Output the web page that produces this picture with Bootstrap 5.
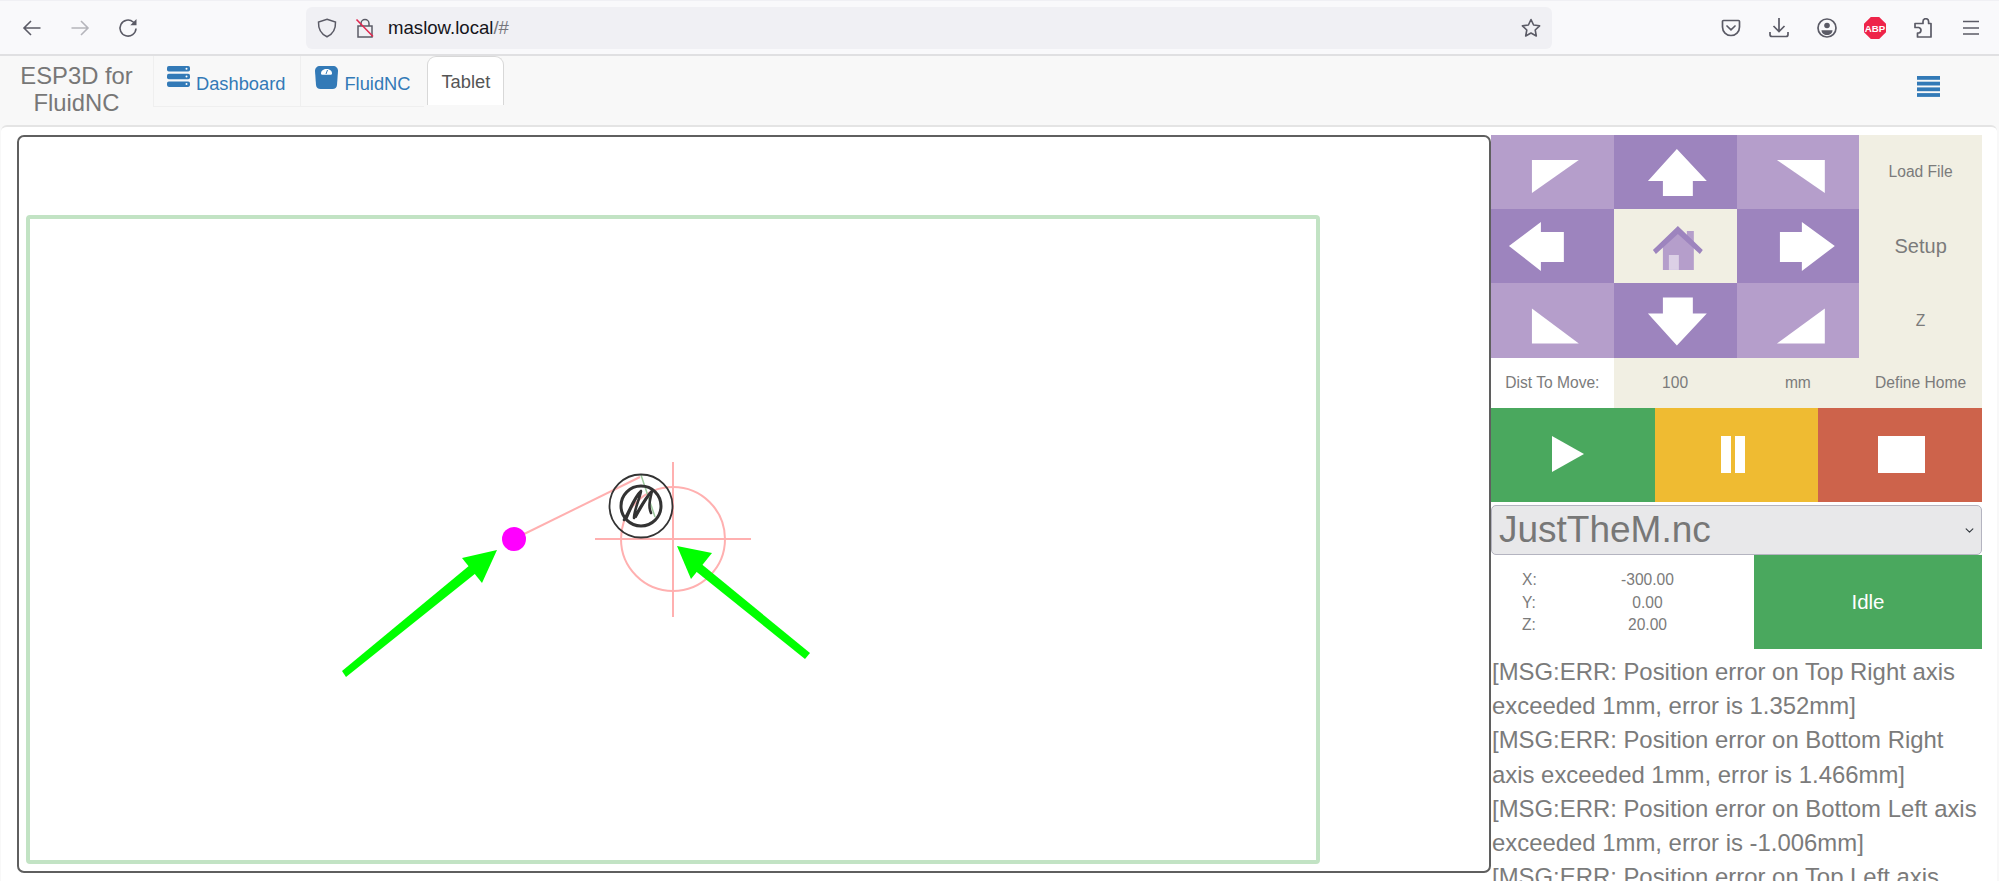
<!DOCTYPE html>
<html lang="en">
<head>
    <meta charset="UTF-8">
    <meta name="viewport" content="width=device-width, initial-scale=1.0">
    <title>ESP3D for FluidNC</title>
    <link href="https://cdn.jsdelivr.net/npm/bootstrap@5.3.0/dist/css/bootstrap.min.css" rel="stylesheet">
    <style>
        html, body {
            height: 100%;
        }
        body {
            font-family: "Liberation Sans", Arial, sans-serif;
            background-color: #f8f8f8;
            color: #7b7b7b;
            overflow: hidden;
        }
        /* browser toolbar */
        .browser-bar {
            height: 56px;
            background-color: #f9f9fb;
            border-top: 1px solid #f0f0f4;
            border-bottom: 2px solid #e0e0e2;
            padding-left: 22px;
            gap: 28px;
        }
        .browser-bar svg {
            width: 20px;
            height: 20px;
            flex: none;
        }
        .browser-bar svg.abp-icon {
            width: 22px;
            height: 22px;
            margin: 0 -1px;
        }
        .url-bar {
            width: 1246px;
            height: 42px;
            margin-left: 140px;
            margin-right: 141px;
            background-color: #f0f0f4;
            border-radius: 6px;
            padding: 0 11px;
            gap: 18px;
            font-size: 18.6px;
            color: #15141a;
        }
        .url-text {
            margin-left: -5px;
        }
        .url-dim {
            color: #77767c;
        }
        /* app navbar */
        .app-nav {
            height: 69px;
            padding: 0;
            background-color: #f8f8f8;
            align-items: flex-start;
            flex-wrap: nowrap;
            justify-content: flex-start;
        }
        .app-brand {
            width: 153px;
            margin: 6px 0 0;
            padding: 0;
            font-size: 23.8px;
            line-height: 27px;
            color: #777;
            text-align: center;
            white-space: normal;
        }
        .app-brand:hover {
            color: #777;
        }
        .app-tabs {
            border: 0;
            flex-wrap: nowrap;
        }
        .app-tabs .nav-link {
            height: 51px;
            padding: 10px 14px 0;
            margin: 0;
            gap: 6px;
            font-size: 18.3px;
            line-height: 25px;
            color: #337ab7;
            border: 0;
            border-left: 1px solid #efefef;
            border-bottom: 1px solid #efefef;
            border-radius: 0;
            background: transparent;
        }
        .app-tabs .nav-link.tab-first {
            padding-left: 13px;
            padding-right: 15px;
        }
        .app-tabs .nav-link span {
            padding-top: 5px;
        }
        .app-tabs .nav-link.active {
            height: 49px;
            margin-left: 3px;
            padding: 12px 13px 0;
            color: #555;
            background-color: #fff;
            border: 1px solid #d8d8d8;
            border-bottom: 0;
            border-radius: 9px 9px 0 0;
        }
        .app-tabs .nav-link.active span {
            padding-top: 0;
        }
        .nav-burger {
            margin: 20px 59px 0 auto;
            padding: 0;
            border: 0;
            background: transparent;
            line-height: 0;
        }
        /* tablet page */
        .tablet-frame {
            height: 756px;
            margin: 0 2px 0 1px;
            padding: 8px 15px 0 16px;
            background-color: #fff;
            border-top: 2px solid #e4e4e4;
            border-radius: 6px 6px 0 0;
            overflow: hidden;
        }
        .canvas-box {
            width: 1474px;
            height: 738px;
            flex: none;
            border: 2px solid #5f5f5f;
            border-radius: 7px;
            background-color: #fff;
        }
        .canvas-box svg {
            display: block;
            width: 100%;
            height: 100%;
        }
        .side-panel {
            width: 491px;
            flex: none;
        }
        .jog-grid {
            display: grid;
            grid-template-columns: repeat(4, 1fr);
            grid-template-rows: 74px 74px 75px 50px;
            font-size: 15.6px;
        }
        .jog-grid > div {
            min-width: 0;
        }
        .jog-grid svg {
            display: block;
            width: 100%;
            height: 100%;
        }
        .jog-light {
            background-color: #b59ecb;
        }
        .jog-dark {
            background-color: #9d84be;
        }
        .jog-beige {
            background-color: #f1efe3;
        }
        .jog-big {
            font-size: 20px;
        }
        .run-row {
            height: 94px;
        }
        .run-row > div {
            flex: 1 1 0;
        }
        .run-go {
            background-color: #4aa85e;
        }
        .run-hold {
            background-color: #efbb32;
        }
        .run-stop {
            background-color: #cd634b;
        }
        .run-row svg {
            margin-bottom: 2px;
        }
        .play-icon {
            margin-right: 10px;
        }
        .pause-icon {
            margin-right: 7px;
        }
        .stop-icon {
            margin-left: 3px;
        }
        .file-select {
            height: 50px;
            margin: 3px 0 0;
            padding: 0 30px 0 7px;
            font-size: 37px;
            line-height: 44px;
            color: #777;
            background-color: #e8e8ea;
            background-size: 11px 9px;
            background-position: right 6px center;
            border: 1px solid #b4b4c0;
            border-radius: 5px;
        }
        .status-row {
            height: 94px;
            font-size: 15.6px;
        }
        .coords {
            width: 263px;
            padding-top: 2px;
            display: grid;
            grid-template-columns: 78px 157px;
            grid-auto-rows: 22.7px;
            align-content: center;
            line-height: 22.7px;
        }
        .coords > div:nth-child(odd) {
            padding-left: 31px;
        }
        .coords > div:nth-child(even) {
            text-align: center;
        }
        .idle-box {
            width: 228px;
            font-size: 20.5px;
            color: #fff;
        }
        .log-text {
            margin-top: 6px;
            padding-left: 1px;
            font-size: 23.9px;
            line-height: 34.2px;
        }
    </style>
</head>
<body>

<!-- browser toolbar -->
<div class="browser-bar d-flex align-items-center">
    <svg viewBox="0 0 20 20" fill="none" stroke="#5b5b66" stroke-width="1.6"><path d="M18.5 10H2M9 3l-7 7 7 7"/></svg>
    <svg viewBox="0 0 20 20" fill="none" stroke="#b5b5bb" stroke-width="1.6"><path d="M1.5 10H18M11 3l7 7-7 7"/></svg>
    <svg viewBox="0 0 20 20" fill="none" stroke="#5b5b66" stroke-width="1.6"><path d="M18 10.5A8 8 0 1 1 15.2 4L17.500 6"/><path d="M18.500 1v6.200h-6.200" fill="#5b5b66" stroke="none"/></svg>
    <div class="url-bar d-flex align-items-center">
        <svg viewBox="0 0 20 20" fill="none" stroke="#5b5b66" stroke-width="1.5"><path d="M10 1.2 18.5 4c.3 7-1.8 11.700-8.500 14.800C3.300 15.700 1.200 11 1.500 4z"/></svg>
        <svg viewBox="0 0 20 20" fill="none" stroke="#5b5b66" stroke-width="1.5"><path d="M6 8V5.500a4 4 0 0 1 8 0V8M3 8h14v11H3z"/><path d="M1.500 1.500 18 18.500" stroke="#e22850" stroke-width="1.600"/></svg>
        <div class="url-text flex-grow-1"><span>maslow.local</span><span class="url-dim">/#</span></div>
        <svg viewBox="0 0 20 20" fill="none" stroke="#5b5b66" stroke-width="1.6" stroke-linejoin="round"><path d="m10 1.500 2.600 5.500 6 .8-4.400 4.200 1.100 6L10 15l-5.300 3 1.100-6L1.400 7.800l6-.8z"/></svg>
    </div>
    <svg viewBox="0 0 20 20" fill="none" stroke="#5b5b66" stroke-width="1.700"><path d="M2.500 2.500h15c.6 0 1 .4 1 1V9c0 4.800-3.800 8.500-8.500 8.500S1.500 13.800 1.500 9V3.500c0-.6.400-1 1-1z"/><path d="m6 8 4 3.800L14 8" stroke-linecap="round"/></svg>
    <svg viewBox="0 0 20 20" fill="none" stroke="#5b5b66" stroke-width="1.700"><path d="M10 0v13M4.500 8l5.500 5.500L15.500 8M1 14v2.500c0 1.100.900 2 2 2h14c1.100 0 2-.9 2-2V14"/></svg>
    <svg viewBox="0 0 20 20" fill="none" stroke="#5b5b66" stroke-width="1.700"><circle cx="10" cy="10" r="9"/><circle cx="10" cy="7.500" r="2.800" fill="#5b5b66" stroke="none"/><path d="M4.500 12.200h11c0 3-2.500 4.800-5.500 4.800s-5.500-1.800-5.500-4.800z" fill="#5b5b66" stroke="none"/></svg>
    <svg class="abp-icon" viewBox="0 0 20 20"><path d="M6.200 0h7.600L20 6.200v7.600L13.800 20H6.200L0 13.800V6.200z" fill="#ee2449"/><text x="10" y="13.300" text-anchor="middle" font-family="Liberation Sans, sans-serif" font-size="8.800" font-weight="700" fill="#fff">ABP</text></svg>
    <svg viewBox="0 0 20 20" fill="none" stroke="#5b5b66" stroke-width="1.700" stroke-linejoin="round"><path d="M8 5.500H10.500V3.500a2.800 2.800 0 0 1 5.600 0V5.500H18.500V19H5V15H6.200a2.800 2.800 0 0 0 0-5.500H2.500V5.500z" transform="translate(-.500 0)"/></svg>
    <svg viewBox="0 0 20 20" fill="none" stroke="#5b5b66" stroke-width="1.700"><path d="M2 3.500h16M2 10h16M2 16h16"/></svg>
</div>

<!-- app navbar -->
<nav class="navbar app-nav">
    <a class="navbar-brand app-brand" href="#">ESP3D for FluidNC</a>
    <ul class="nav nav-tabs app-tabs">
        <li class="nav-item">
            <a class="nav-link tab-first d-flex" href="#">
                <svg width="23" height="21" viewBox="0 0 23 21"><g fill="#337ab7"><rect y="0" width="23" height="5.500" rx="1.800"/><rect y="7.700" width="23" height="5.500" rx="1.800"/><rect y="15.400" width="23" height="5.500" rx="1.800"/></g><g fill="#fff"><circle cx="19.500" cy="2.700" r="1"/><circle cx="19.500" cy="10.400" r="1"/><circle cx="19.500" cy="18.100" r="1"/></g></svg>
                <span>Dashboard</span>
            </a>
        </li>
        <li class="nav-item">
            <a class="nav-link d-flex" href="#">
                <svg width="23" height="23" viewBox="0 0 23 23"><path d="M5 0h13c3 0 5 2 5 5l-1 14c-.2 2.500-2 4-4.500 4h-12C3 23 1.200 21.500 1 19L0 5c0-3 2-5 5-5z" fill="#337ab7"/><path d="M6 7.500C6 4.500 8.500 3 11.500 3S17 4.500 17 7.500c0 .8-.4 1.200-1.200 1.200H7.200C6.400 8.700 6 8.300 6 7.500z" fill="#fff"/><path d="m11 8 1.500-4" stroke="#337ab7" stroke-width="1"/></svg>
                <span>FluidNC</span>
            </a>
        </li>
        <li class="nav-item">
            <a class="nav-link active d-flex" href="#"><span>Tablet</span></a>
        </li>
    </ul>
    <button class="nav-burger" type="button">
        <svg width="23" height="21" viewBox="0 0 23 21" fill="#337ab7"><rect y="0" width="23" height="3.800"/><rect y="5.700" width="23" height="3.800"/><rect y="11.400" width="23" height="3.800"/><rect y="17.100" width="23" height="3.800"/></svg>
    </button>
</nav>

<!-- tablet page -->
<div class="tablet-frame d-flex align-items-start">
    <div class="canvas-box">
        <!-- viewBox uses page coordinates so the drawing is easy to check -->
        <svg viewBox="19 137 1470 734">
            <rect x="28" y="217" width="1290" height="645" rx="2" fill="none" stroke="#c2e3c4" stroke-width="4"/>

            <!-- target -->
            <g stroke="#ffb0b0" stroke-width="2" fill="none">
                <circle cx="673" cy="539" r="52"/>
                <path d="M595 539H751M673 462V617"/>
                <path d="M514 539 640 477"/>
            </g>
            <circle cx="514" cy="539" r="12" fill="#f0f"/>

            <!-- logo path -->
            <path d="M641 475 655 517" stroke="#9cc99c" stroke-width="1.500" fill="none"/>
            <g fill="none" stroke="#333" stroke-linecap="round" stroke-linejoin="round">
                <circle cx="641" cy="506" r="31.500" stroke-width="1.800"/>
                <circle cx="641" cy="506" r="20" stroke-width="3"/>
                <path d="M624 520C630 510 634 497 641 491 640 498 634 510 634 518 640 508 645 498 652 491 650 500 648 506 651 513" stroke-width="2.600"/>
                <path d="M627 518C632 506 636 498 641 491M636 517C641 508 647 498 652 491" stroke-width="1.800"/>
            </g>

            <!-- arrows -->
            <g fill="#0f0">
                <path d="M342 671 470 565 476 573 346 677z"/>
                <path d="M497 550 462 558 482 583z"/>
                <path d="M810 653 699 562 693 569 805 659z"/>
                <path d="M677 546 712 553 691 579z"/>
            </g>
        </svg>
    </div>

    <div class="side-panel">
        <div class="jog-grid text-center">
            <div class="jog-light"><svg viewBox="0 0 123 74"><path d="M41 25h47L41 58z" fill="#fff"/></svg></div>
            <div class="jog-dark"><svg viewBox="0 0 123 74"><path d="M63 14 93 46H79V61H49V46H34z" fill="#fff"/></svg></div>
            <div class="jog-light"><svg viewBox="0 0 123 74"><path d="M88 25H40L88 58z" fill="#fff"/></svg></div>
            <div class="jog-beige d-flex align-items-center justify-content-center">Load File</div>

            <div class="jog-dark"><svg viewBox="0 0 123 74"><path d="M18 37 50 13V23H73V53H50V62z" fill="#fff"/></svg></div>
            <div class="jog-beige"><svg viewBox="0 0 123 74"><path d="M49 37 64 23 80 37V61H49z" fill="#b59ecb"/><path d="M73 22h7v14h-7z" fill="#b59ecb"/><path d="M55 46H65V61H55z" fill="#dcd0e6"/><path d="M64 17 89 41 86 45 64 25 42 45 39 41z" fill="#9d84be"/></svg></div>
            <div class="jog-dark"><svg viewBox="0 0 123 74"><path d="M98 37 65 13V23H43V53H65V62z" fill="#fff"/></svg></div>
            <div class="jog-beige jog-big d-flex align-items-center justify-content-center">Setup</div>

            <div class="jog-light"><svg viewBox="0 0 123 74"><path d="M41 25V60H88z" fill="#fff"/></svg></div>
            <div class="jog-dark"><svg viewBox="0 0 123 74"><path d="M63 62 93 30H79V14H49V30H34z" fill="#fff"/></svg></div>
            <div class="jog-light"><svg viewBox="0 0 123 74"><path d="M88 25V60H40z" fill="#fff"/></svg></div>
            <div class="jog-beige d-flex align-items-center justify-content-center">Z</div>

            <div class="d-flex align-items-center justify-content-center">Dist To Move:</div>
            <div class="jog-beige d-flex align-items-center justify-content-center">100</div>
            <div class="jog-beige d-flex align-items-center justify-content-center">mm</div>
            <div class="jog-beige d-flex align-items-center justify-content-center">Define Home</div>
        </div>

        <div class="run-row d-flex">
            <div class="run-go d-flex align-items-center justify-content-center">
                <svg class="play-icon" width="32" height="36" viewBox="0 0 32 36"><path d="M0 0 32 18 0 36z" fill="#fff"/></svg>
            </div>
            <div class="run-hold d-flex align-items-center justify-content-center">
                <svg class="pause-icon" width="24" height="37" viewBox="0 0 24 37" fill="#fff"><rect width="10" height="37"/><rect x="14" width="10" height="37"/></svg>
            </div>
            <div class="run-stop d-flex align-items-center justify-content-center">
                <svg class="stop-icon" width="47" height="37" viewBox="0 0 47 37"><rect width="47" height="37" fill="#fff"/></svg>
            </div>
        </div>

        <select class="form-select file-select">
            <option>JustTheM.nc</option>
        </select>

        <div class="status-row d-flex">
            <div class="coords">
                <div>X:</div><div>-300.00</div>
                <div>Y:</div><div>0.00</div>
                <div>Z:</div><div>20.00</div>
            </div>
            <div class="idle-box run-go d-flex align-items-center justify-content-center">Idle</div>
        </div>

        <div class="log-text">
            [MSG:ERR: Position error on Top Right axis exceeded 1mm, error is 1.352mm]<br>
            [MSG:ERR: Position error on Bottom Right axis exceeded 1mm, error is 1.466mm]<br>
            [MSG:ERR: Position error on Bottom Left axis exceeded 1mm, error is -1.006mm]<br>
            [MSG:ERR: Position error on Top Left axis exceeded 1mm, error is 1.2mm]
        </div>
    </div>
</div>

<script src="https://cdn.jsdelivr.net/npm/bootstrap@5.3.0/dist/js/bootstrap.bundle.min.js"></script>
</body>
</html>
